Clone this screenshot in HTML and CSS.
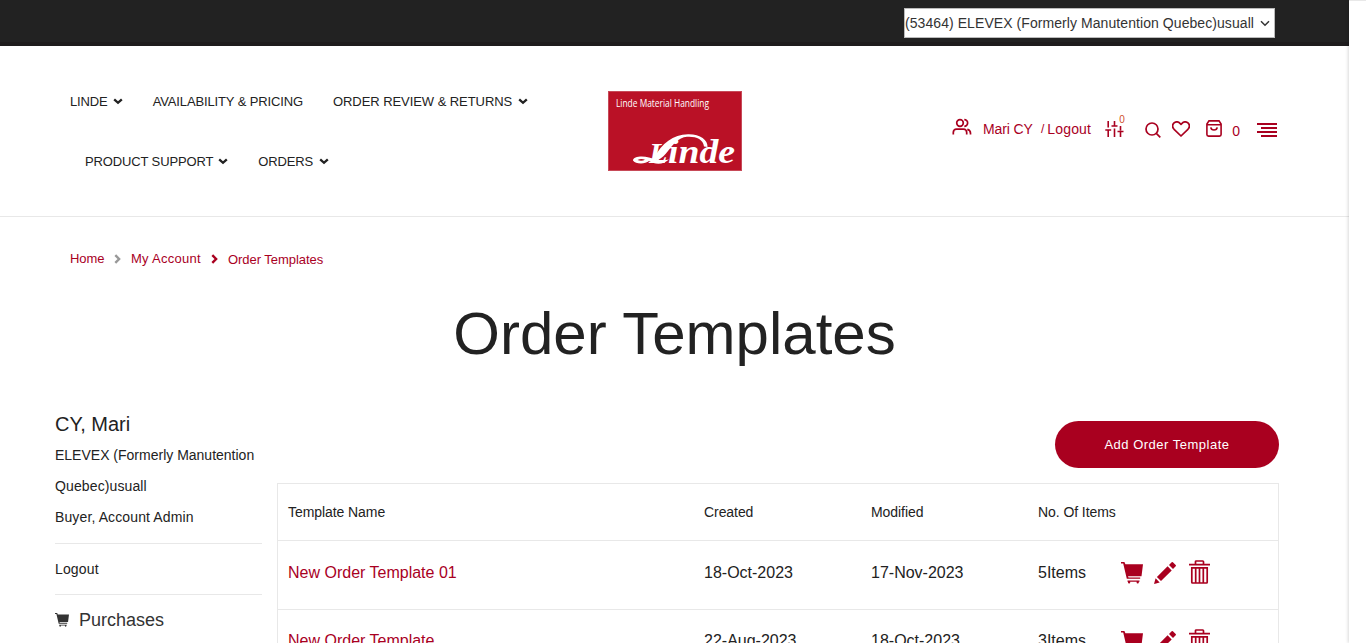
FILE: index.html
```html
<!DOCTYPE html>
<html lang="en">
<head>
<meta charset="utf-8">
<title>Order Templates</title>
<link rel="stylesheet" href="styles.css">
</head>
<body>
<svg class="defs" width="0" height="0" aria-hidden="true">
  <symbol id="down" viewBox="0 0 10 7"><path d="M1.200 1.300 5 4.800 8.800 1.300" fill="none" stroke="currentColor" stroke-width="2.300"/></symbol>
  <symbol id="cart" viewBox="0 0 22 22"><path d="M0 0h3.400l1 2.200H22l-1.500 12H7l.5 1.300h11.700v1.200H5.800L2.200 1.600H0zM6.500 18.400h12v1.300h-.7v.8a1.100 1.100 0 0 1-2.200 0v-.8H9.200v.8a1.100 1.100 0 0 1-2.200 0v-.8h-.5z" fill="currentColor"/></symbol>
  <symbol id="pencil" viewBox="0 0 22 22"><path d="M0 22 1.600 16.300 5.700 20.400zM2.900 15 13.600 4.300l4.100 4.100L7 19.100zM15 3l2.700-2.700q.6-.5 1.200 0L21.700 3.100q.5.6 0 1.200L19 7z" fill="currentColor"/></symbol>
  <symbol id="trash" viewBox="0 0 21 24"><path d="M6.500 4V1.800q0-.8.8-.8h6.400q.8 0 .8.800V4M0 4.700h21M2.800 7.800h15.400M2.800 7v15.300q0 .7.7.7h14q.7 0 .7-.7V7M6.700 8v14.500M10.500 8v14.500M14.300 8v14.500" fill="none" stroke="currentColor" stroke-width="1.700"/></symbol>
</svg>
<div class="page">
  <div class="topbar">
    <div class="account-select"><span>(53464) ELEVEX (Formerly Manutention Quebec)usuall</span>
      <svg width="10" height="7" viewBox="0 0 10 7"><path d="M1 1.200 5 5.200 9 1.200" fill="none" stroke="currentColor" stroke-width="1.500"/></svg>
    </div>
  </div>
  <header class="header">
    <nav class="nav">
      <div class="nav-row">
        <a>LINDE<svg><use href="#down"/></svg></a>
        <a>AVAILABILITY &amp; PRICING</a>
        <a class="review">ORDER REVIEW &amp; RETURNS<svg><use href="#down"/></svg></a>
      </div>
      <div class="nav-row second">
        <a>PRODUCT SUPPORT<svg><use href="#down"/></svg></a>
        <a>ORDERS<svg><use href="#down"/></svg></a>
      </div>
    </nav>
    <svg class="logo" width="134" height="80" viewBox="0 0 134 80">
      <rect x=".5" y=".5" width="133" height="79" fill="#ba1126" stroke="#c74a58"/>
      <text x="8" y="15.500" class="logo-small" textLength="93" lengthAdjust="spacingAndGlyphs">Linde Material Handling</text>
      <text y="71.500" class="logo-big"><tspan x="41" class="logo-cap">L</tspan><tspan x="60" textLength="67" lengthAdjust="spacingAndGlyphs">inde</tspan></text>
      <path d="M46 67C54 52 65 43.800 80 43.300 92 43 100 49 99.500 56L96 55.500C95 48 88 45.300 79 45.800 70 46.500 65 54 60 60 57 64 54 67 50 69zM41 70C37 73.500 27 73 25 69.500 25 65.500 34 64.500 41 66.500 48 68.500 54 70 61 68.500 55 74 47 73.500 41 70z" fill="#fff"/>
      <path d="M29.500 69q3.500-2 7.500-.3-3.500 2-7.500.3" fill="#ba1126"/>
    </svg>
    <div class="tools">
      <svg class="users" width="20" height="18" viewBox="0 0 20 18"><g fill="none" stroke="currentColor" stroke-width="1.700"><circle cx="8" cy="5" r="3.300"/><path d="M1.300 16.500v-2q0-3.300 3.300-3.300h6.800q3.300 0 3.300 3.300v2M12.300 1.600a3.300 3.300 0 0 1 0 6.700M15.300 11.300q3.200.7 3.200 4v1.200"/></g></svg>
      <a class="user">Mari CY</a><span class="slash">/</span><a class="out">Logout</a>
      <span class="compare"><svg width="19" height="16" viewBox="0 0 19 16"><path d="M3.200 0v6.500M3.200 9v7M.3 9h5.900M9.500 0v5M6.500 5h6M9.500 7.500V16M15.500 5v4.500M12.500 10.500h6M15.500 10.500V16" fill="none" stroke="currentColor" stroke-width="1.600"/></svg><sup>0</sup></span>
      <svg class="search" width="16" height="16" viewBox="0 0 16 16"><circle cx="7" cy="7" r="6" fill="none" stroke="currentColor" stroke-width="1.700"/><path d="m11.300 11.300 4 4" stroke="currentColor" stroke-width="1.700"/></svg>
      <svg class="heart" width="18" height="16" viewBox="0 0 18 16"><path d="M9 15 2.100 8.300C-2.100 3.600 4.200-2 8 2.400l1 1 1-1c3.800-4.400 10.100 1.200 5.900 5.900z" fill="none" stroke="currentColor" stroke-width="1.700" stroke-linejoin="round"/></svg>
      <svg class="bag" width="16" height="17" viewBox="0 0 16 17"><path d="M3 .9h10L15.100 4v10.500q0 1.600-1.600 1.600h-11Q.9 16.100.9 14.500V4zM1 4.700h14M4.800 7.300c.5 3.500 5.900 3.500 6.400 0" fill="none" stroke="currentColor" stroke-width="1.600"/></svg>
      <span class="count">0</span>
      <svg class="menu" width="20" height="14" viewBox="0 0 20 14"><path d="M0 1h20M4 5h16M0 9h20M4 13h16" stroke="currentColor" stroke-width="2"/></svg>
    </div>
  </header>
  <div class="crumbs">
    <a class="home">Home</a><svg class="grey" width="7" height="10" viewBox="0 0 7 10"><path d="m1.300 1.200 3.800 3.800-3.800 3.800" fill="none" stroke="currentColor" stroke-width="2.400"/></svg>
    <a class="mine">My Account</a><svg width="7" height="10" viewBox="0 0 7 10"><path d="m1.300 1.200 3.800 3.800-3.800 3.800" fill="none" stroke="currentColor" stroke-width="2.400"/></svg>
    <a class="current">Order Templates</a>
  </div>
  <h1>Order Templates</h1>
  <main class="main">
    <aside class="side">
      <h2>CY, Mari</h2>
      <p>ELEVEX (Formerly Manutention <span class="wide">Quebec)usuall</span></p>
      <p class="wide">Buyer, Account Admin</p>
      <div class="logout">Logout</div>
      <div class="purchases"><svg width="14" height="14"><use href="#cart"/></svg>Purchases</div>
    </aside>
    <section class="content">
      <button class="add">Add Order Template</button>
      <div class="table">
        <div class="row head"><span>Template Name</span><span>Created</span><span>Modified</span><span>No. Of Items</span></div>
        <div class="row"><a>New Order Template 01</a><span>18-Oct-2023</span><span>17-Nov-2023</span><span>5Items</span><div class="actions"><svg width="22" height="22"><use href="#cart"/></svg><svg width="22" height="22"><use href="#pencil"/></svg><svg width="21" height="24"><use href="#trash"/></svg></div></div>
        <div class="row last"><a>New Order Template</a><span>22-Aug-2023</span><span>18-Oct-2023</span><span>3Items</span><div class="actions"><svg width="22" height="22"><use href="#cart"/></svg><svg width="22" height="22"><use href="#pencil"/></svg><svg width="21" height="24"><use href="#trash"/></svg></div></div>
      </div>
    </section>
  </main>
</div>
<div class="gutter"></div>
</body>
</html>
```
FILE: styles.css
```css
* { box-sizing: border-box; }
body { margin: 0; height: 643px; overflow: hidden; display: flex; background: #fff; color: #222; font: 14px/31px "Liberation Sans", Arial, sans-serif; }
.defs { position: absolute; }
svg { flex: none; }
.page { width: 1349px; height: 643px; overflow: hidden; flex: none; }
.gutter { flex: 1; border-top: 1px solid #e8e8e8; box-shadow: -1px 0 3px rgba(0,0,0,.15); background: #fff; }
.topbar { height: 46px; background: #222; padding: 8px 74px 0 0; display: flex; justify-content: flex-end; border-bottom: 4px solid #1e1c1d; }
.account-select { width: 371px; height: 30px; background: #fff; border: 1px solid #bbb; color: #333; line-height: 28px; letter-spacing: .07px; display: flex; align-items: center; justify-content: space-between; padding: 0 4px 0 0; white-space: nowrap; }
.header { height: 171px; border-bottom: 1px solid #e8e8e8; display: flex; }
.nav { width: 608px; padding: 25px 0 0 55px; }
.nav-row { display: flex; height: 60px; line-height: 60px; font-size: 13px; letter-spacing: -.13px; }
.nav-row.second { padding-left: 15px; }
.nav-row a { padding: 1px 15px 0; display: flex; align-items: center; white-space: nowrap; }
.nav-row .review { letter-spacing: -.06px; }
.nav-row svg { width: 10px; height: 7px; margin-left: 6px; }
.nav-row a:first-child svg { margin-left: 5px; }
.logo { margin-top: 45px; }
.logo-small { font: 10px "Open Sans", sans-serif; fill: #fff; }
.logo-big { font: italic bold 34px "Liberation Serif", serif; fill: #fff; }
.logo-cap { font-size: 30px; }
.tools { color: #a9001f; display: flex; align-items: flex-start; height: 40px; margin: 64px 0 0 210px; line-height: 38px; white-space: nowrap; }
.users { margin: 8px 11px 0 0; }
.user { width: 51px; letter-spacing: -.1px; }
.slash { font-size: 12px; margin: 0 3px 0 7px; }
.out { width: 44px; letter-spacing: .15px; }
.compare { display: flex; margin: 11px 0 0 14px; width: 39px; position: relative; }
.compare sup { position: absolute; left: 14px; top: -6px; font-size: 10px; line-height: 10px; color: #d0502b; }
.search { margin: 12px 0 0 1px; }
.heart { margin: 11px 0 0 11px; }
.bag { margin: 10px 0 0 16px; }
.count { margin: 2px 0 0 10px; }
.menu { margin: 13px 0 0 17px; }
.crumbs { height: 84px; padding: 26px 70px 0; display: flex; align-items: flex-start; color: #a9001f; font-size: 13px; }
.crumbs svg { margin: 11px 10px 0; }
.crumbs .grey { color: #999; }
.home { width: 34px; letter-spacing: -.1px; }
.mine { width: 71px; letter-spacing: .27px; }
.crumbs .mine + svg { margin-left: 9px; }
.current { padding-top: 1px; letter-spacing: -.05px; }
h1 { margin: 0; font-size: 60px; line-height: 66px; font-weight: 400; text-align: center; }
.main { display: flex; padding: 41px 70px 0 55px; }
.side { width: 207px; margin-right: 15px; }
h2 { font-size: 20px; line-height: 32px; font-weight: 400; margin: 0; }
.side p { margin: 0; }
.wide { letter-spacing: .12px; }
.logout { margin-top: 10px; height: 52px; border: solid #e8e8e8; border-width: 1px 0; line-height: 50px; letter-spacing: .15px; }
.purchases { display: flex; align-items: center; font-size: 18px; line-height: 50px; gap: 10px; color: #333; }
.content { width: 1002px; display: flex; flex-direction: column; align-items: flex-end; }
.add { margin: 13px 0 15px; width: 224px; height: 47px; border: 0; border-radius: 24px; background: #a9001f; color: #fff; font: 13px "Liberation Sans", Arial, sans-serif; letter-spacing: .5px; }
.table { width: 1002px; border: 1px solid #e8e8e8; }
.row { display: grid; grid-template-columns: 416px 167px 167px 83px 1fr; height: 69px; border-bottom: 1px solid #e8e8e8; padding-left: 10px; font-size: 16px; line-height: 64px; }
.row.head { height: 57px; font-size: 14px; line-height: 56px; white-space: nowrap; letter-spacing: -.07px; }
.row.last { line-height: 62px; }
.row a { color: #a9001f; }
.actions { display: flex; color: #a9001f; gap: 11px; padding-top: 21px; }
.actions svg:last-child { margin: -2px 0 0 2px; }
```
